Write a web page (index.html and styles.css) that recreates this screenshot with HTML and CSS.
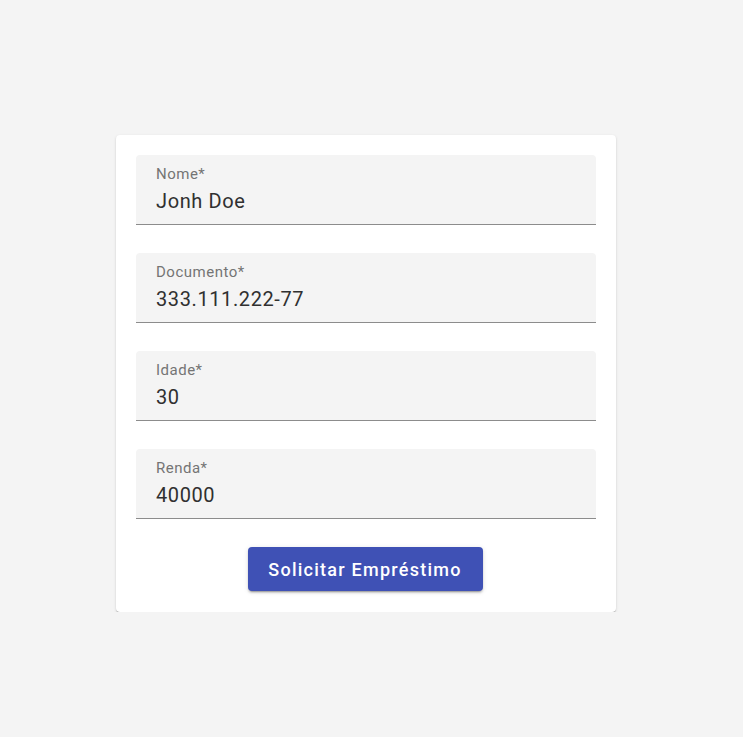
FILE: index.html
```html
<!DOCTYPE html>
<html lang="pt">
<head>
<meta charset="utf-8">
<title>Solicitar Empréstimo</title>
<link rel="stylesheet" href="styles.css">
</head>
<body>
<main class="page">
  <form class="card">
    <label class="field">
      <span class="field-label">Nome*</span>
      <input class="field-input" type="text" value="Jonh Doe">
    </label>
    <label class="field">
      <span class="field-label">Documento*</span>
      <input class="field-input" type="text" value="333.111.222-77">
    </label>
    <label class="field">
      <span class="field-label">Idade*</span>
      <input class="field-input" type="text" value="30">
    </label>
    <label class="field">
      <span class="field-label">Renda*</span>
      <input class="field-input" type="text" value="40000">
    </label>
    <div class="actions">
      <button class="btn" type="button">Solicitar Empréstimo</button>
    </div>
  </form>
</main>
</body>
</html>
```
FILE: styles.css
```css
html, body {
  margin: 0;
  padding: 0;
  background: #f4f4f4;
  font-family: Roboto, "Noto Sans", sans-serif;
}
.page {
  display: flex;
  justify-content: center;
  padding-top: 135px;
  padding-right: 11px;
}
.card {
  width: 460px;
  background: #fff;
  border-radius: 4px;
  box-shadow: 0 2px 1px -1px rgba(0,0,0,0.2), 0 1px 1px rgba(0,0,0,0.14), 0 1px 3px rgba(0,0,0,0.12);
  padding: 20px 20px 21px;
  display: flex;
  flex-direction: column;
  gap: 28px;
}
.field {
  display: flex;
  flex-direction: column;
  height: 69px;
  background: #f4f4f4;
  border-radius: 4px 4px 0 0;
  border-bottom: 1px solid #8c8c8c;
  padding: 0 20px;
  box-sizing: content-box;
}
.field-label {
  margin-top: 10px;
  font-size: 15px;
  line-height: 18px;
  letter-spacing: 0.5px;
  color: #747474;
}
.field-input {
  border: 0;
  outline: 0;
  background: transparent;
  padding: 0;
  margin-top: 6px;
  font-family: Roboto, "Noto Sans", sans-serif;
  font-size: 20px;
  line-height: 24px;
  letter-spacing: 0.6px;
  color: #303030;
}
.actions {
  display: flex;
  justify-content: center;
  padding-right: 2px;
}
.btn {
  height: 44px;
  width: 235px;
  border: 0;
  border-radius: 4px;
  background: #3f51b5;
  color: #fff;
  font-family: Roboto, "Noto Sans", sans-serif;
  font-weight: 500;
  font-size: 18px;
  letter-spacing: 1.25px;
  box-shadow: 0 3px 1px -2px rgba(0,0,0,0.2), 0 2px 2px rgba(0,0,0,0.14), 0 1px 5px rgba(0,0,0,0.12);
}
```
